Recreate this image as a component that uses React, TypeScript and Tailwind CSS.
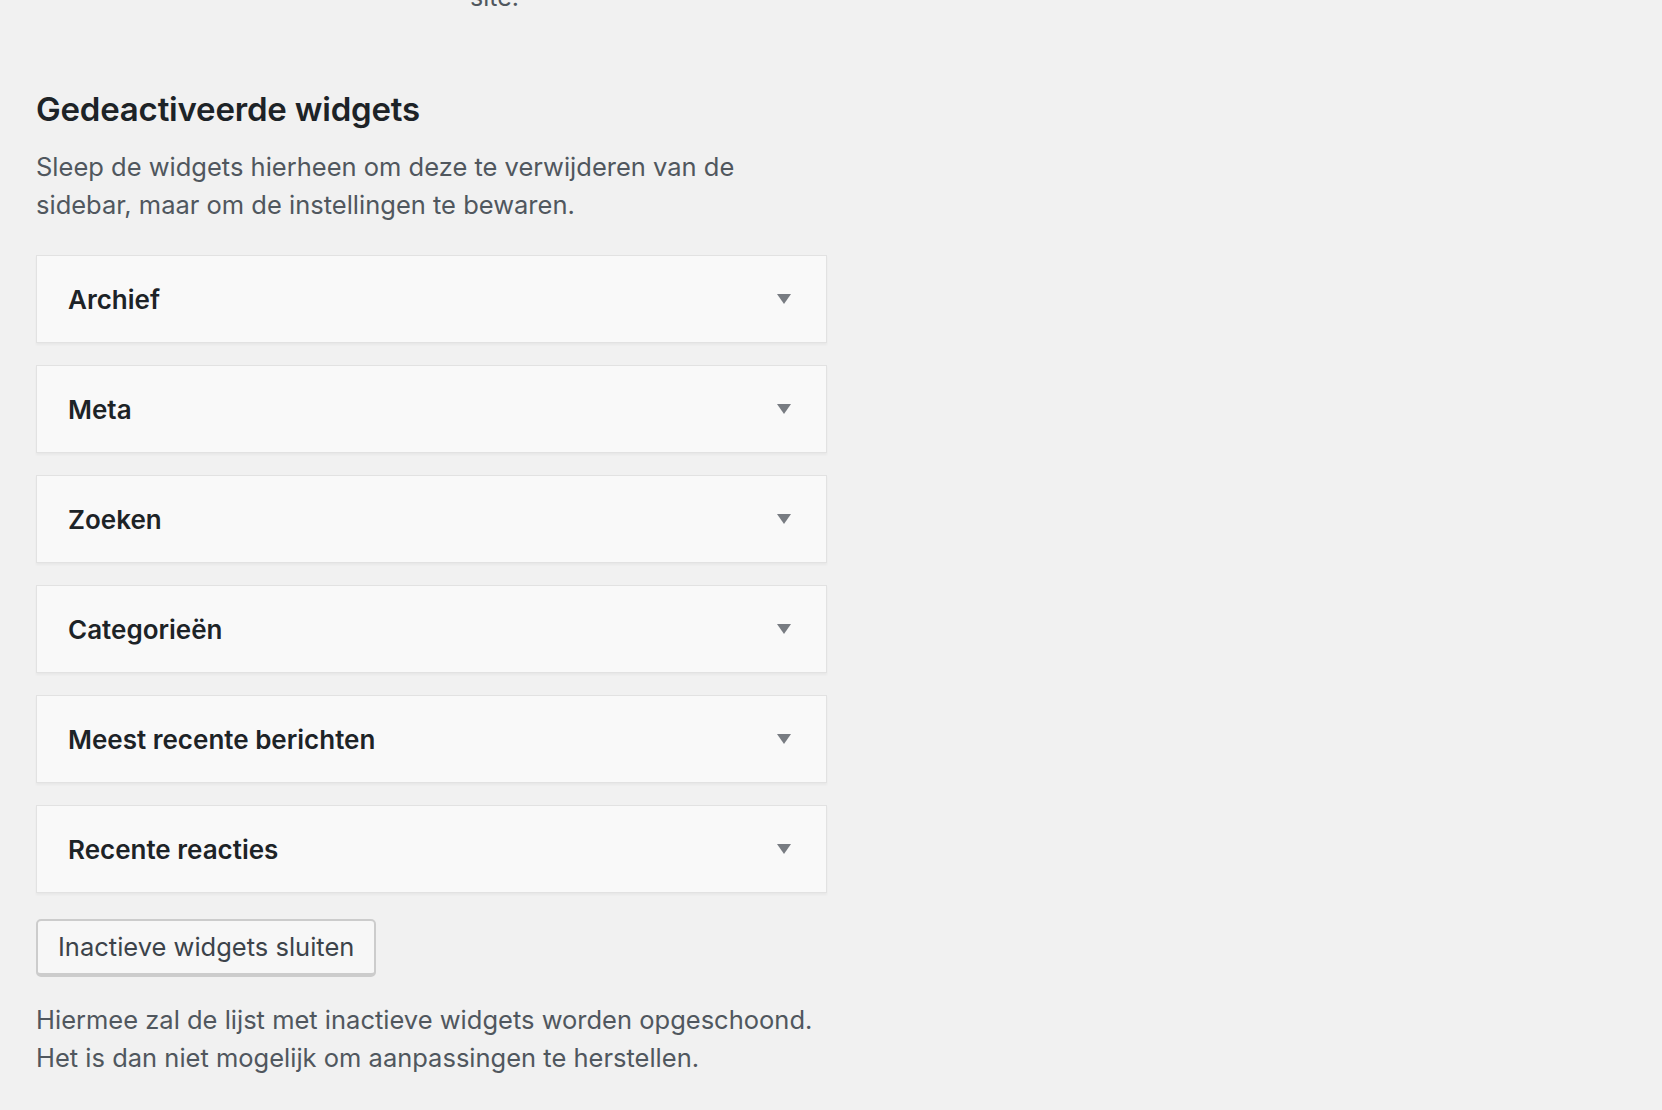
const widgets = [
  "Archief",
  "Meta",
  "Zoeken",
  "Categorieën",
  "Meest recente berichten",
  "Recente reacties",
];

function Caret() {
  return (
    <svg width="16" height="12" viewBox="0 0 16 12" className="shrink-0">
      <path d="M1 1h14L8 11z" fill="#787c82" />
    </svg>
  );
}

export default function App() {
  return (
    <div
      className="min-h-screen bg-[#f1f1f1] overflow-hidden"
      style={{ fontFamily: "Inter, 'Noto Sans', sans-serif" }}
    >
      <div className="-mt-[22px] pl-[470px] text-[25px] leading-[38px] text-[#50575e]">
        site.
      </div>

      <div className="w-[791px] ml-[36px] pt-[73px]">
        <h2 className="text-[33px] leading-[40px] font-semibold text-[#1d2327] tracking-[-0.2px]">
          Gedeactiveerde widgets
        </h2>
        <p className="mt-[19px] text-[25.5px] leading-[38px] text-[#50575e]">
          Sleep de widgets hierheen om deze te verwijderen van de
          <br />
          sidebar, maar om de instellingen te bewaren.
        </p>

        <div className="mt-[31px] flex flex-col gap-[22px]">
          {widgets.map((w) => (
            <div
              key={w}
              className="h-[88px] flex items-center justify-between pl-[31px] pr-[34px] bg-[#f9f9f9] border border-[#e2e2e2] shadow-[0_2px_2px_rgba(0,0,0,0.04)]"
            >
              <span className="text-[26px] font-semibold text-[#1d2327]">
                {w}
              </span>
              <Caret />
            </div>
          ))}
        </div>

        <button className="mt-[26px] h-[58px] px-[20px] rounded-[5px] bg-[#f7f7f7] border-2 border-[#cccccc] border-b-[4px] text-[25.5px] text-[#3c434a]">
          Inactieve widgets sluiten
        </button>

        <p className="mt-[24px] text-[25.5px] leading-[38px] text-[#50575e]">
          Hiermee zal de lijst met inactieve widgets worden opgeschoond.
          <br />
          Het is dan niet mogelijk om aanpassingen te herstellen.
        </p>
      </div>
    </div>
  );
}
